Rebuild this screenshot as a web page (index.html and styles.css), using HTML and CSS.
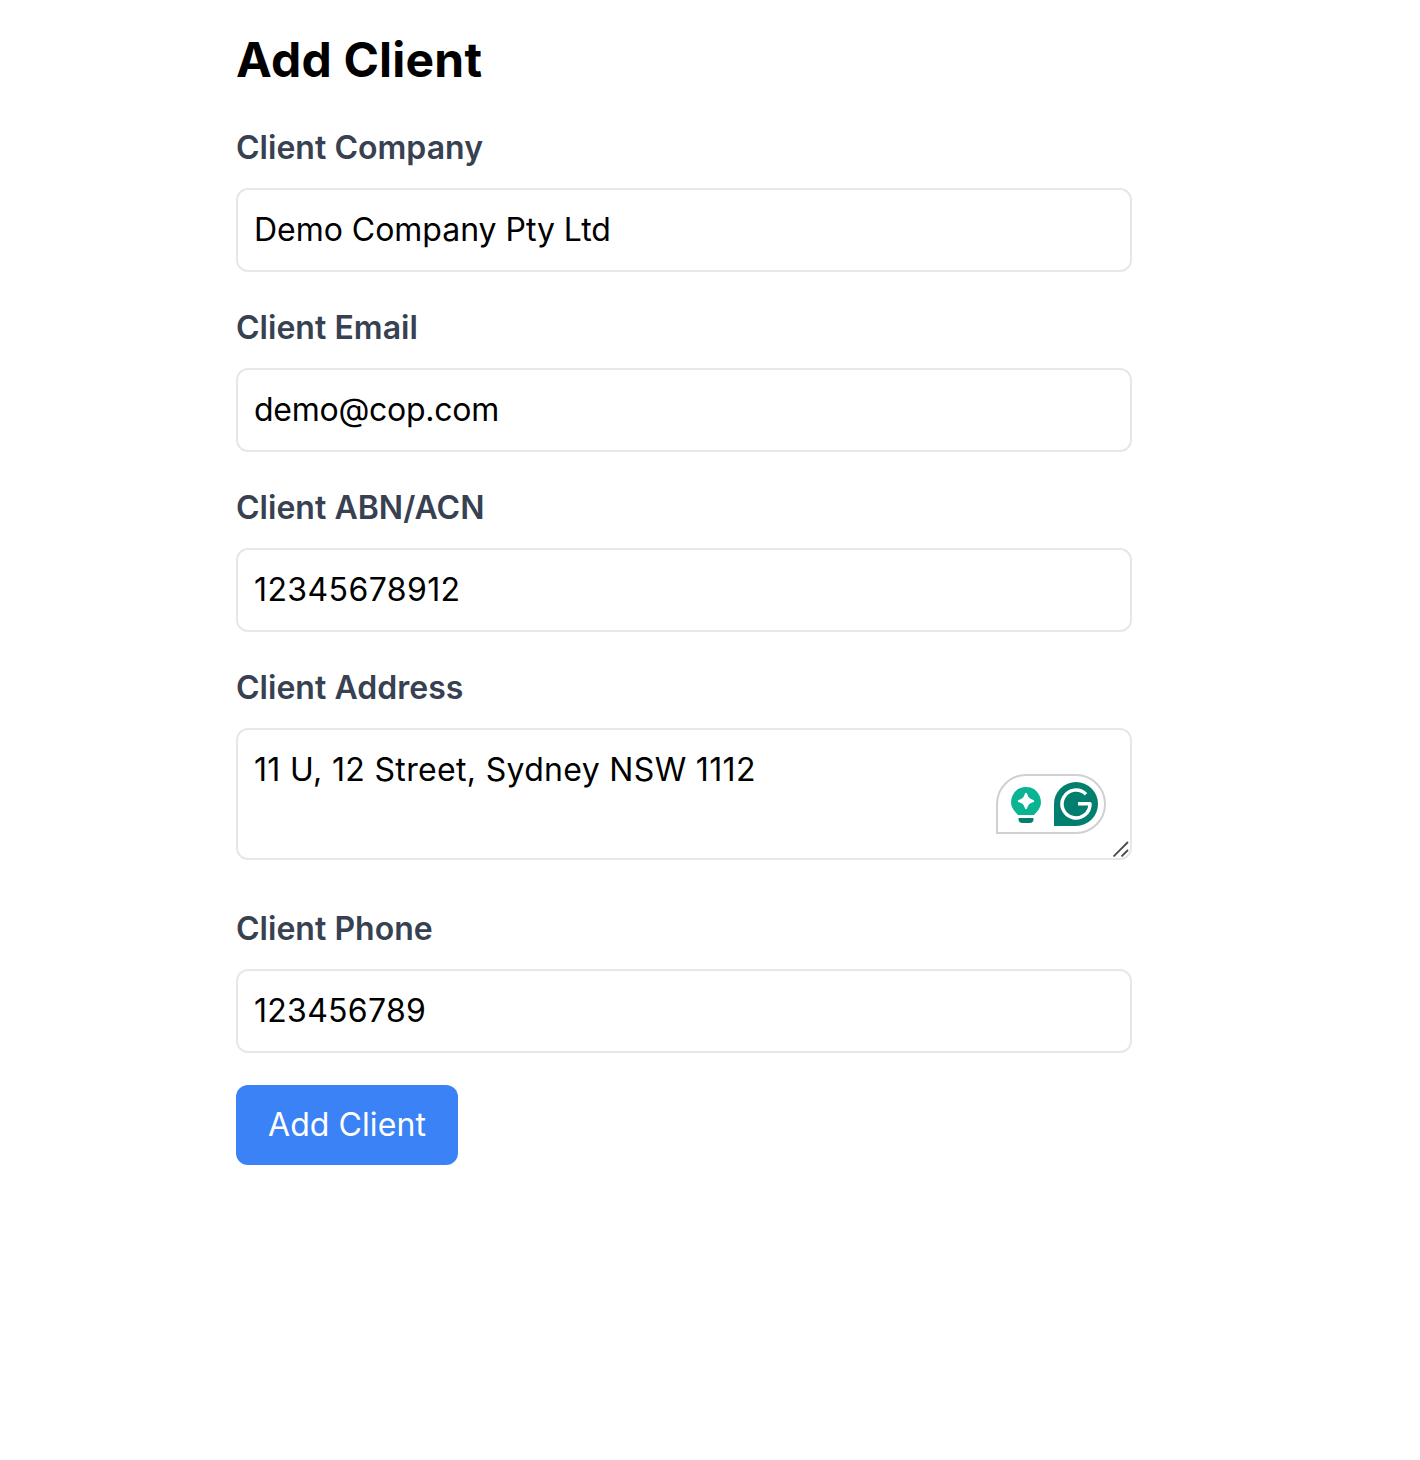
FILE: index.html
```html
<!DOCTYPE html>
<html lang="en">
<head>
<meta charset="utf-8">
<title>Add Client</title>
<link rel="stylesheet" href="styles.css">
</head>
<body>
<main class="page">
  <h1 class="title">Add Client</h1>
  <form class="form">
    <div class="field">
      <label class="label" for="company">Client Company</label>
      <input class="input company" id="company" type="text" value="Demo Company Pty Ltd">
    </div>
    <div class="field">
      <label class="label" for="email">Client Email</label>
      <input class="input email" id="email" type="text" value="demo@cop.com">
    </div>
    <div class="field">
      <label class="label" for="abn">Client ABN/ACN</label>
      <input class="input abn" id="abn" type="text" value="12345678912">
    </div>
    <div class="field field-address">
      <label class="label" for="address">Client Address</label>
      <div class="area-wrap">
        <textarea class="input area" id="address" spellcheck="false">11 U, 12 Street, Sydney NSW 1112</textarea>
        <svg class="assistant" width="110" height="60" viewBox="0 0 110 60">
          <path d="M1 59V30A29 29 0 0 1 30 1H80A29 29 0 0 1 80 59Z" fill="#fff" stroke="#cfcfd6" stroke-width="2"/>
          <path d="M30 13A14.800 14.800 0 0 1 40.500 38.200L38 41H22L19.500 38.200A14.800 14.800 0 0 1 30 13Z" fill="#0ab493"/>
          <path d="M30 18.800Q31 19 31.500 20.800Q32.500 24.500 36.200 25.500Q38.200 26 38.200 27Q38.200 28 36.200 28.500Q32.500 29.500 31.500 33.200Q31 35.200 30 35.200Q29 35.200 28.500 33.200Q27.500 29.500 23.800 28.500Q21.800 28 21.800 27Q21.800 26 23.800 25.500Q27.500 24.500 28.500 20.800Q29 19 30 18.800Z" fill="#fff"/>
          <path d="M22.500 44H37.500V45A4 4 0 0 1 33.500 49H26.500A4 4 0 0 1 22.500 45Z" fill="#027e6f"/>
          <path d="M58 52V30A22 22 0 1 1 80 52Z" fill="#027e6f"/>
          <path d="M90 20.200A14 14 0 1 0 94 29.700H82" fill="none" stroke="#fff" stroke-width="3.500" stroke-linejoin="round"/>
        </svg>
        <svg class="grip" width="16" height="16" viewBox="0 0 16 16">
          <path d="M.5 15.500L15 1M8.500 15.500L15 9" fill="none" stroke="#4b4b50" stroke-width="1.800"/>
        </svg>
      </div>
    </div>
    <div class="field">
      <label class="label" for="phone">Client Phone</label>
      <input class="input phone" id="phone" type="text" value="123456789">
    </div>
    <button class="submit" type="button">Add Client</button>
  </form>
</main>
</body>
</html>
```
FILE: styles.css
```css
* { box-sizing: border-box; }

body {
  margin: 0;
  background: #fff;
  color: #000;
  font-family: Inter, sans-serif;
  font-size: 32px;
  line-height: 48px;
}

.page {
  width: 896px;
  margin-left: 236px;
  padding-top: 28px;
}

.title {
  margin: 0 0 32px;
  font-size: 48px;
  line-height: 64px;
  font-weight: 700;
  letter-spacing: 0.2px;
}

.form {
  display: flex;
  flex-direction: column;
  align-items: flex-start;
}

.field {
  width: 100%;
  margin-bottom: 32px;
}

.field-address { margin-bottom: 45px; }

.label {
  display: block;
  margin-bottom: 16px;
  color: #374151;
  font-weight: 600;
  letter-spacing: 0.03px;
}

.input {
  display: block;
  width: 100%;
  height: 84px;
  margin: 0;
  padding: 15px 16px 17px;
  border: 2px solid #e5e7eb;
  border-radius: 12px;
  background: #fff;
  color: #000;
  font: inherit;
  outline: 0;
}

.company { letter-spacing: -0.03px; }
.email { letter-spacing: -0.27px; }
.abn { letter-spacing: 0.4px; }
.phone { letter-spacing: 0.28px; }

.area-wrap { position: relative; }

.area {
  height: 132px;
  padding: 16px;
  overflow: hidden;
  resize: none;
  letter-spacing: 0.33px;
}

.assistant {
  position: absolute;
  top: 46px;
  right: 26px;
}

.grip {
  position: absolute;
  right: 3px;
  bottom: 3px;
}

.submit {
  width: 222px;
  padding: 16px 0;
  border: 0;
  border-radius: 12px;
  background: #3b82f6;
  color: #fff;
  font: inherit;
  letter-spacing: 0.08px;
}
```
